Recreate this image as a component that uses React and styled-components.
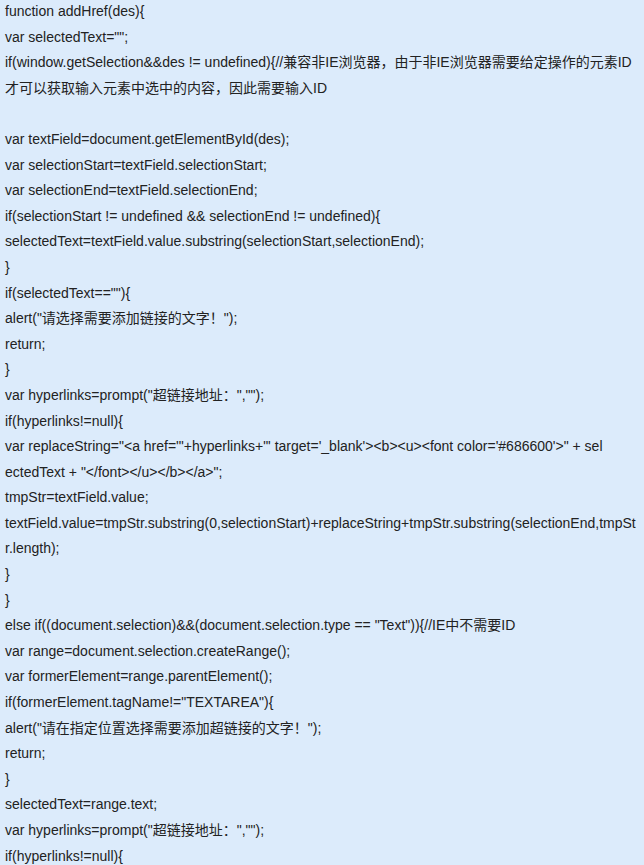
import React from "react";
import styled, { createGlobalStyle } from "styled-components";

const GlobalStyle = createGlobalStyle`
    html, body {
        margin: 0;
        padding: 0;
        background: #dcebfb;
    }
`;

// each entry is one source line; an array keeps the wrap point of the original
const lines = [
    'function addHref(des){',
    'var selectedText="";',
    ['if(window.getSelection&&des != undefined){//兼容非IE浏览器，由于非IE浏览器需要给定操作的元素ID', '才可以获取输入元素中选中的内容，因此需要输入ID'],
    '',
    'var textField=document.getElementById(des);',
    'var selectionStart=textField.selectionStart;',
    'var selectionEnd=textField.selectionEnd;',
    'if(selectionStart != undefined && selectionEnd != undefined){',
    'selectedText=textField.value.substring(selectionStart,selectionEnd);',
    '}',
    'if(selectedText==""){',
    'alert("请选择需要添加链接的文字！");',
    'return;',
    '}',
    'var hyperlinks=prompt("超链接地址：","");',
    'if(hyperlinks!=null){',
    ['var replaceString="<a href=\'"+hyperlinks+"\' target=\'_blank\'><b><u><font color=\'#686600\'>" + sel', 'ectedText + "</font></u></b></a>";'],
    'tmpStr=textField.value;',
    ['textField.value=tmpStr.substring(0,selectionStart)+replaceString+tmpStr.substring(selectionEnd,tmpSt', 'r.length);'],
    '}',
    '}',
    'else if((document.selection)&&(document.selection.type == "Text")){//IE中不需要ID',
    'var range=document.selection.createRange();',
    'var formerElement=range.parentElement();',
    'if(formerElement.tagName!="TEXTAREA"){',
    'alert("请在指定位置选择需要添加超链接的文字！");',
    'return;',
    '}',
    'selectedText=range.text;',
    'var hyperlinks=prompt("超链接地址：","");',
    'if(hyperlinks!=null){',
];

const Article = styled.div`
    width: 639px;
    padding: 0 0 0 5px;
    font-family: "Liberation Sans", "Noto Sans CJK SC", sans-serif;
    font-size: 14px;
    line-height: 25.6px;
    color: #222222;
    white-space: nowrap;
    overflow: hidden;
`;

const Line = styled.p`
    margin: 0;
    min-height: 25.6px;
    position: relative;
    top: -1px;
`;

const App = () => {
    return (
        <>
            <GlobalStyle />
            <Article>
                {lines.map((l, i) => (
                    <Line key={i}>
                        {Array.isArray(l)
                            ? l.map((part, j) => (
                                  <React.Fragment key={j}>
                                      {j > 0 && <br />}
                                      {part}
                                  </React.Fragment>
                              ))
                            : l || "\u00a0"}
                    </Line>
                ))}
            </Article>
        </>
    );
};

export default App;
